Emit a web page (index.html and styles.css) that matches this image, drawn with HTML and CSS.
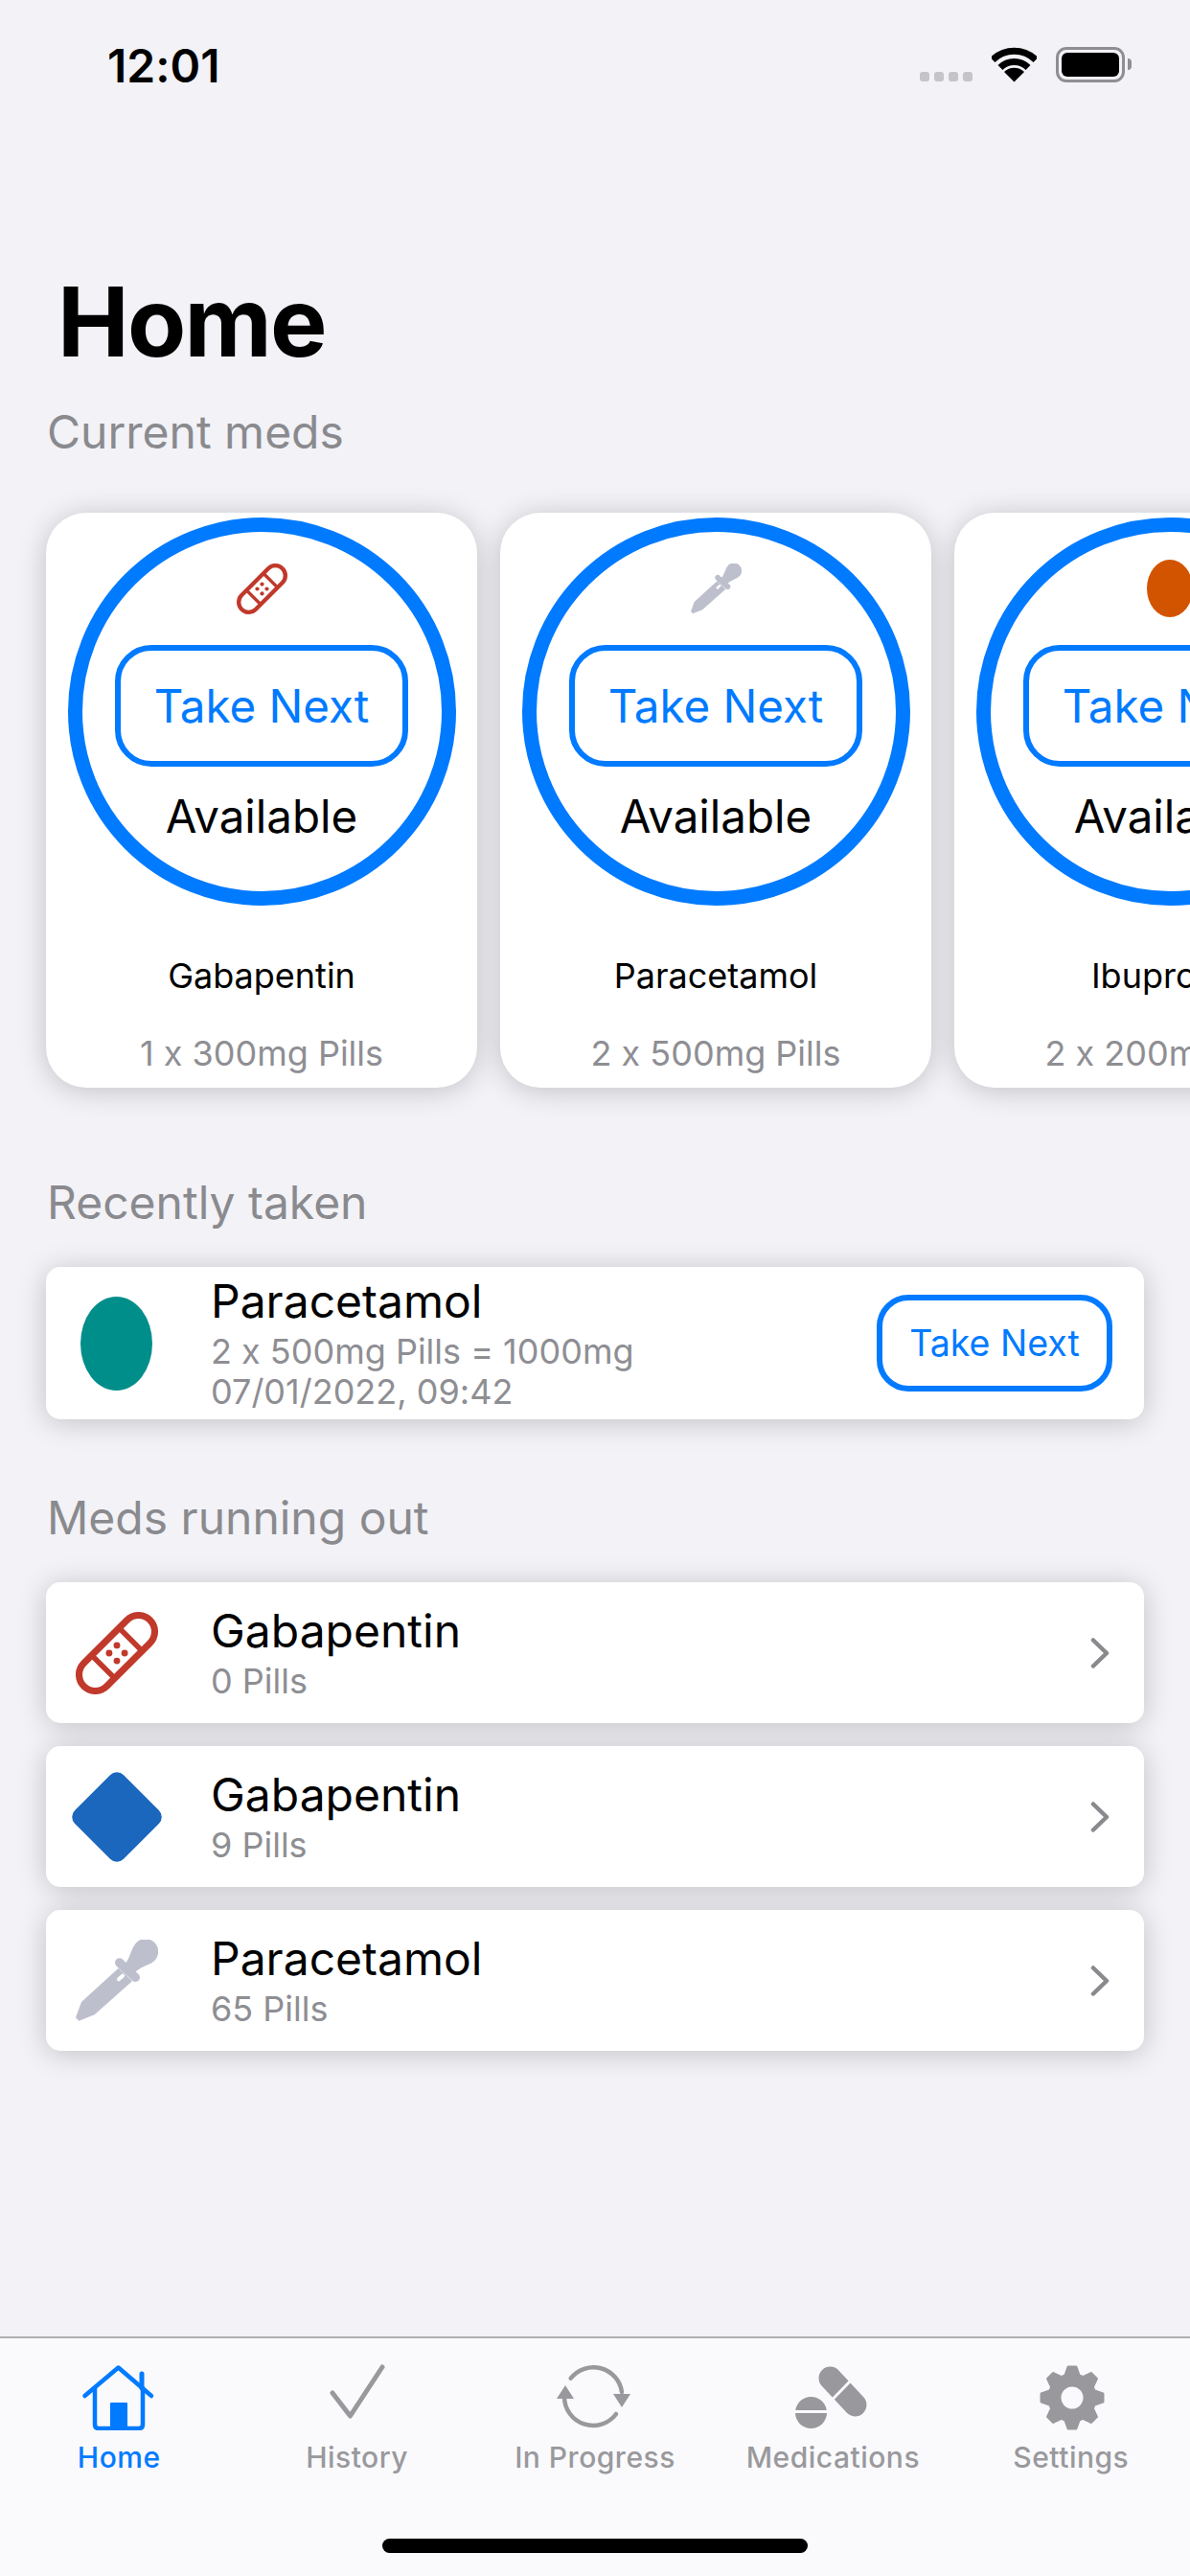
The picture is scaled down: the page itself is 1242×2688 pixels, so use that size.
FILE: index.html
```html
<!DOCTYPE html>
<html lang="en">
<head>
    <meta charset="UTF-8">
    <title>Home</title>
    <link rel="stylesheet" href="styles.css">
</head>
<body>

<svg class="icon-defs" xmlns="http://www.w3.org/2000/svg">
  <symbol id="bandage" viewBox="0 0 85 85">
    <g transform="rotate(-45 42.5 42.5)" fill="none" stroke="#c0392b" stroke-width="7">
      <rect x="-5.75" y="25.75" width="96.5" height="33.5" rx="16.75"/>
      <path d="M22.5 25v35M62.5 25v35" stroke-width="5.5"/>
    </g>
    <g fill="#c0392b">
      <circle cx="42.5" cy="34.5" r="3.4"/>
      <circle cx="34.5" cy="42.5" r="3.4"/>
      <circle cx="50.5" cy="42.5" r="3.4"/>
      <circle cx="42.5" cy="50.5" r="3.4"/>
    </g>
  </symbol>
  <symbol id="dropper" viewBox="148 1155 258 258">
    <path fill="#bdbfcd" d="M302 1232C318 1212 320 1190 332 1172A40 40 0 1 1 388 1226C372 1236 350 1240 328 1262Z"/>
    <path stroke="#bdbfcd" stroke-width="28" stroke-linecap="round" d="M285 1227L335 1273"/>
    <path fill="#bdbfcd" d="M282 1244L166 1350L148 1399L158 1409L207 1390L325 1285Z"/>
    <path stroke="#fff" stroke-width="12" stroke-linecap="round" d="M283 1279L295 1268"/>
  </symbol>
</svg>

<div class="phone">
  <div class="status-bar">
    <span class="clock">12:01</span>
    <div class="status-icons">
      <div class="signal"><i></i><i></i><i></i><i></i></div>
      <svg class="wifi" width="47" height="37" viewBox="0 0 47 37">
        <path d="M1 13.4A32 32 0 0 1 46 13.4M9 21.5A20.5 20.5 0 0 1 38 21.5" fill="none" stroke="#000" stroke-width="7"/>
        <path d="M23.5 36.5L13 26A15 15 0 0 1 34 26Z"/>
      </svg>
      <div class="battery"><div class="battery-fill"></div></div>
      <div class="battery-nib"></div>
    </div>
  </div>

  <h1>Home</h1>

  <h2 class="section-title current-title">Current meds</h2>
  <div class="carousel">
    <div class="med-card">
      <div class="ring">
        <svg class="ring-icon"><use href="#bandage"/></svg>
        <div class="take-btn">Take Next</div>
        <div class="ring-label">Available</div>
      </div>
      <div class="med-name">Gabapentin</div>
      <div class="med-dose">1 x 300mg Pills</div>
    </div>
    <div class="med-card">
      <div class="ring">
        <svg class="ring-icon"><use href="#dropper"/></svg>
        <div class="take-btn">Take Next</div>
        <div class="ring-label">Available</div>
      </div>
      <div class="med-name">Paracetamol</div>
      <div class="med-dose">2 x 500mg Pills</div>
    </div>
    <div class="med-card">
      <div class="ring">
        <div class="ring-icon"><div class="pill-orange"></div></div>
        <div class="take-btn">Take Next</div>
        <div class="ring-label">Available</div>
      </div>
      <div class="med-name">Ibuprofen</div>
      <div class="med-dose">2 x 200mg Pills</div>
    </div>
  </div>

  <h2 class="section-title recent-title">Recently taken</h2>
  <div class="list">
    <div class="row row-recent">
      <div class="row-icon"><div class="pill-teal"></div></div>
      <div class="row-text">
        <div class="row-name">Paracetamol</div>
        <div class="row-sub">2 x 500mg Pills = 1000mg</div>
        <div class="row-sub">07/01/2022, 09:42</div>
      </div>
      <div class="take-btn take-btn-small">Take Next</div>
    </div>
  </div>

  <h2 class="section-title running-title">Meds running out</h2>
  <div class="list">
    <div class="row">
      <div class="row-icon"><svg class="row-svg"><use href="#bandage"/></svg></div>
      <div class="row-text">
        <div class="row-name">Gabapentin</div>
        <div class="row-sub">0 Pills</div>
      </div>
      <svg class="chevron" viewBox="0 0 20 32"><path d="M3 2.5L17 16L3 29.5"/></svg>
    </div>
    <div class="row">
      <div class="row-icon"><div class="pill-diamond"></div></div>
      <div class="row-text">
        <div class="row-name">Gabapentin</div>
        <div class="row-sub">9 Pills</div>
      </div>
      <svg class="chevron" viewBox="0 0 20 32"><path d="M3 2.5L17 16L3 29.5"/></svg>
    </div>
    <div class="row">
      <div class="row-icon"><svg class="row-svg"><use href="#dropper"/></svg></div>
      <div class="row-text">
        <div class="row-name">Paracetamol</div>
        <div class="row-sub">65 Pills</div>
      </div>
      <svg class="chevron" viewBox="0 0 20 32"><path d="M3 2.5L17 16L3 29.5"/></svg>
    </div>
  </div>

  <div class="tab-bar">
    <div class="tabs">
      <div class="tab tab-active">
        <svg class="tab-icon" viewBox="0 0 80 72" fill="none" stroke="#007aff" stroke-width="4.5" stroke-linecap="round" stroke-linejoin="round">
          <path d="M4.5 36L39.5 6.5L74 36"/>
          <path d="M15 28V66Q15 70 19 70H61Q65 70 65 66V28"/>
          <path d="M64 13V28" stroke-width="5"/>
          <path d="M32 70V44H48V70Z" fill="#007aff" stroke-width="2"/>
        </svg>
        <span>Home</span>
      </div>
      <div class="tab">
        <svg class="tab-icon" viewBox="0 0 80 72" fill="none" stroke="#99999d" stroke-width="5" stroke-linecap="round" stroke-linejoin="round">
          <path d="M14 33L32.5 57L66 6"/>
        </svg>
        <span>History</span>
      </div>
      <div class="tab">
        <svg class="tab-icon" viewBox="0 0 80 72" fill="none" stroke="#99999d" stroke-width="4.5" stroke-linecap="round">
          <path d="M14.7 17.7A30 30 0 0 1 68 32"/>
          <path d="M59 34H77L68 48Z" fill="#99999d" stroke="none"/>
          <path d="M62 55A30 30 0 0 1 8 37"/>
          <path d="M0 39H18L9 25Z" fill="#99999d" stroke="none"/>
        </svg>
        <span>In Progress</span>
      </div>
      <div class="tab">
        <svg class="tab-icon" viewBox="0 0 80 72">
          <g fill="#99999d">
            <circle cx="17.5" cy="53.5" r="16.5"/>
            <rect x="19.5" y="19.5" width="62" height="24" rx="12" transform="rotate(47 50.5 31.5)"/>
          </g>
          <path d="M0 52.5H35M40 39.5L59 20" stroke="#fafafc" stroke-width="3"/>
        </svg>
        <span>Medications</span>
      </div>
      <div class="tab">
        <svg class="tab-icon" viewBox="-41 -38 80 72">
          <circle r="18.5" fill="none" stroke="#99999d" stroke-width="14"/>
          <g fill="#99999d" stroke="#99999d" stroke-width="3" stroke-linejoin="round">
            <path d="M-7.5 -22L-4 -32H4L7.5 -22Z"/>
            <path transform="rotate(45)" d="M-7.5 -22L-4 -32H4L7.5 -22Z"/>
            <path transform="rotate(90)" d="M-7.5 -22L-4 -32H4L7.5 -22Z"/>
            <path transform="rotate(135)" d="M-7.5 -22L-4 -32H4L7.5 -22Z"/>
            <path transform="rotate(180)" d="M-7.5 -22L-4 -32H4L7.5 -22Z"/>
            <path transform="rotate(225)" d="M-7.5 -22L-4 -32H4L7.5 -22Z"/>
            <path transform="rotate(270)" d="M-7.5 -22L-4 -32H4L7.5 -22Z"/>
            <path transform="rotate(315)" d="M-7.5 -22L-4 -32H4L7.5 -22Z"/>
          </g>
        </svg>
        <span>Settings</span>
      </div>
    </div>
    <div class="home-indicator"></div>
  </div>
</div>

</body>
</html>
```

FILE: styles.css
```css
* {
	box-sizing: border-box;
}
body {
	margin: 0;
	background: #f2f2f7;
	font-family: Inter, "Noto Sans", sans-serif;
	font-feature-settings: "calt" 0;
	color: #000;
}
.icon-defs {
	display: none;
}
.phone {
	width: 1242px;
	height: 2688px;
	display: flex;
	flex-direction: column;
	overflow: hidden;
}

/* Status bar */
.status-bar {
	height: 278px;
	padding: 39px 61px 0 112px;
	display: flex;
	justify-content: space-between;
	align-items: flex-start;
}
.clock {
	font-size: 48px;
	line-height: 60px;
	font-weight: 600;
}
.status-icons {
	display: flex;
	align-items: flex-start;
	margin-top: 10px;
}
.signal {
	display: flex;
	gap: 5px;
	margin: 26px 20px 0 0;
}
.signal i {
	width: 10px;
	height: 10px;
	border-radius: 3px;
	background: #c4c4c9;
}
.wifi {
	margin-right: 20px;
}
.battery {
	width: 72px;
	height: 37px;
	padding: 3px;
	border: 3px solid #8e8e93;
	border-radius: 11px;
	background: #f2f2f7;
}
.battery-fill {
	width: 100%;
	height: 100%;
	background: #000;
	border-radius: 6px;
}
.battery-nib {
	width: 4px;
	height: 12px;
	margin: 12px 0 0 3px;
	background: #8e8e93;
	border-radius: 0 4px 4px 0;
}

h1 {
	margin: 0 0 0 60px;
	font-size: 100px;
	line-height: 116px;
	font-weight: 700;
	letter-spacing: -1.8px;
}
.section-title {
	margin: 0 0 0 49px;
	font-size: 48px;
	line-height: 60px;
	font-weight: 400;
	color: #8a8a8e;
}
.current-title {
	margin-top: 27px;
}

/* Current meds cards */
.carousel {
	display: flex;
	gap: 24px;
	padding: 54px 0 30px 48px;
	overflow: hidden;
}
.med-card {
	flex: none;
	width: 450px;
	height: 600px;
	padding-top: 5px;
	background: #fff;
	border-radius: 42px;
	box-shadow: 0 3px 30px rgba(0, 0, 0, 0.2);
	display: flex;
	flex-direction: column;
	align-items: center;
}
.ring {
	width: 405px;
	height: 405px;
	border: 15px solid #007aff;
	border-radius: 50%;
	display: flex;
	flex-direction: column;
	align-items: center;
}
.ring-icon {
	width: 53px;
	height: 53px;
	margin-top: 33px;
	display: flex;
	justify-content: center;
	overflow: visible;
}
.pill-orange {
	flex: none;
	width: 48px;
	height: 60px;
	margin-top: -4px;
	border-radius: 50%;
	background: #d35400;
}
.take-btn {
	width: 306px;
	height: 127px;
	margin-top: 32px;
	border: 6px solid #007aff;
	border-radius: 38px;
	color: #007aff;
	font-size: 47.5px;
	display: flex;
	align-items: center;
	justify-content: center;
}
.ring-label {
	margin-top: 22px;
	font-size: 47.5px;
	line-height: 60px;
}
.med-name {
	margin-top: 51px;
	font-size: 36px;
	line-height: 44px;
}
.med-dose {
	margin-top: 37px;
	font-size: 36px;
	line-height: 44px;
	color: #8e8e93;
}

/* Rows */
.list {
	display: flex;
	flex-direction: column;
	gap: 24px;
	margin: 0 48px;
}
.recent-title {
	margin-top: 60px;
	margin-bottom: 37px;
}
.running-title {
	margin-top: 73px;
	margin-bottom: 37px;
}
.row {
	height: 147px;
	padding-right: 36px;
	background: #fff;
	border-radius: 15px;
	box-shadow: 0 3px 30px rgba(0, 0, 0, 0.2);
	display: flex;
	align-items: center;
}
.row-recent {
	height: 159px;
	padding-right: 33px;
}
.row-icon {
	flex: none;
	width: 172px;
	padding-left: 25px;
	display: flex;
}
.row-svg {
	width: 86px;
	height: 86px;
	margin-left: 6px;
}
.pill-teal {
	width: 75px;
	height: 98px;
	margin-left: 11px;
	border-radius: 50%;
	background: #008e8a;
}
.pill-diamond {
	width: 72px;
	height: 72px;
	margin: 11px 0 11px 13px;
	border-radius: 10px;
	background: #1b67bd;
	transform: rotate(45deg);
}
.row-text {
	flex: 1;
	min-width: 0;
}
.row-name {
	font-size: 48px;
	line-height: 54px;
	margin-bottom: 4px;
}
.row-sub {
	font-size: 36px;
	line-height: 42px;
	color: #8e8e93;
}
.take-btn-small {
	width: 246px;
	height: 101px;
	margin-top: 0;
	border-radius: 33px;
	font-size: 37.5px;
}
.chevron {
	width: 20px;
	height: 32px;
	fill: none;
	stroke: #8a8a8e;
	stroke-width: 4.5;
	stroke-linecap: round;
	stroke-linejoin: round;
}

/* Tab bar */
.tab-bar {
	margin-top: auto;
	height: 250px;
	background: #fafafc;
	border-top: 2px solid #aeaeb2;
	display: flex;
	flex-direction: column;
}
.tabs {
	display: grid;
	grid-template-columns: repeat(5, 1fr);
	padding-top: 24px;
}
.tab {
	display: flex;
	flex-direction: column;
	align-items: center;
	color: #99999d;
	font-size: 30px;
	font-weight: 500;
	letter-spacing: 0.5px;
}
.tab-active {
	color: #007aff;
}
.tab-icon {
	width: 80px;
	height: 72px;
	margin-bottom: 10px;
}
.home-indicator {
	width: 444px;
	height: 15px;
	margin: auto auto 24px;
	background: #000;
	border-radius: 8px;
}
```
